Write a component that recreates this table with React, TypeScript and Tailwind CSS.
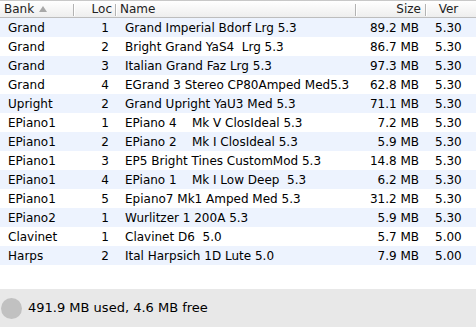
const rows = [
  { bank: "Grand", loc: "1", name: "Grand Imperial Bdorf Lrg 5.3", size: "89.2 MB", ver: "5.30" },
  { bank: "Grand", loc: "2", name: "Bright Grand YaS4  Lrg 5.3", size: "86.7 MB", ver: "5.30" },
  { bank: "Grand", loc: "3", name: "Italian Grand Faz Lrg 5.3", size: "97.3 MB", ver: "5.30" },
  { bank: "Grand", loc: "4", name: "EGrand 3 Stereo CP80Amped Med5.3", size: "62.8 MB", ver: "5.30" },
  { bank: "Upright", loc: "2", name: "Grand Upright YaU3 Med 5.3", size: "71.1 MB", ver: "5.30" },
  { bank: "EPiano1", loc: "1", name: "EPiano 4    Mk V ClosIdeal 5.3", size: "7.2 MB", ver: "5.30" },
  { bank: "EPiano1", loc: "2", name: "EPiano 2    Mk I ClosIdeal 5.3", size: "5.9 MB", ver: "5.30" },
  { bank: "EPiano1", loc: "3", name: "EP5 Bright Tines CustomMod 5.3", size: "14.8 MB", ver: "5.30" },
  { bank: "EPiano1", loc: "4", name: "EPiano 1    Mk I Low Deep  5.3", size: "6.2 MB", ver: "5.30" },
  { bank: "EPiano1", loc: "5", name: "Epiano7 Mk1 Amped Med 5.3", size: "31.2 MB", ver: "5.30" },
  { bank: "EPiano2", loc: "1", name: "Wurlitzer 1 200A 5.3", size: "5.9 MB", ver: "5.30" },
  { bank: "Clavinet", loc: "1", name: "Clavinet D6  5.0", size: "5.7 MB", ver: "5.00" },
  { bank: "Harps", loc: "2", name: "Ital Harpsich 1D Lute 5.0", size: "7.9 MB", ver: "5.00" },
];

function Divider() {
  return <div className="mt-[3px] h-[12px] w-[2px] shrink-0 border-l border-[#b3b3b3] bg-white" />;
}

export default function App() {
  return (
    <div className="flex h-[327px] w-[476px] flex-col bg-white text-[12px] text-black [font-family:'DejaVu_Sans',sans-serif]">
      <div className="flex h-[18px] shrink-0 border-t border-b border-t-[#c8c8c8] border-b-[#bdbdbd] bg-gradient-to-b from-white to-[#eeeeee] text-[#222]">
        <div className="flex w-[73px] items-center pl-[4px]">
          Bank
          <svg width="8" height="6" viewBox="0 0 8 6" className="ml-[5px]">
            <path d="M4 0 L8 6 L0 6 Z" fill="#a8a8a8" />
          </svg>
        </div>
        <Divider />
        <div className="flex w-[40px] items-center justify-end pr-[3px]">Loc</div>
        <Divider />
        <div className="flex w-[238px] items-center pl-[3px]">Name</div>
        <Divider />
        <div className="flex w-[68px] items-center justify-end pr-[4px]">Size</div>
        <Divider />
        <div className="flex w-[43px] items-center justify-center">Ver</div>
      </div>
      <div className="flex-1">
        {rows.map((r, i) => (
          <div
            key={i}
            className={`flex h-[19px] items-center ${i % 2 === 0 ? "bg-[#edf3fe]" : "bg-white"}`}
          >
            <div className="w-[75px] pl-[8px]">{r.bank}</div>
            <div className="w-[34px] text-right">{r.loc}</div>
            <div className="w-[248px] whitespace-pre pl-[16px]">{r.name}</div>
            <div className="w-[62px] text-right">{r.size}</div>
            <div className="pl-[16px]">{r.ver}</div>
          </div>
        ))}
      </div>
      <div className="flex h-[38px] shrink-0 items-center bg-[#e8e8e8] text-[13px]">
        <div className="ml-[1px] h-[21px] w-[21px] rounded-full bg-[#c1c1c1]" />
        <span className="ml-[6px]">491.9 MB used, 4.6 MB free</span>
      </div>
    </div>
  );
}
